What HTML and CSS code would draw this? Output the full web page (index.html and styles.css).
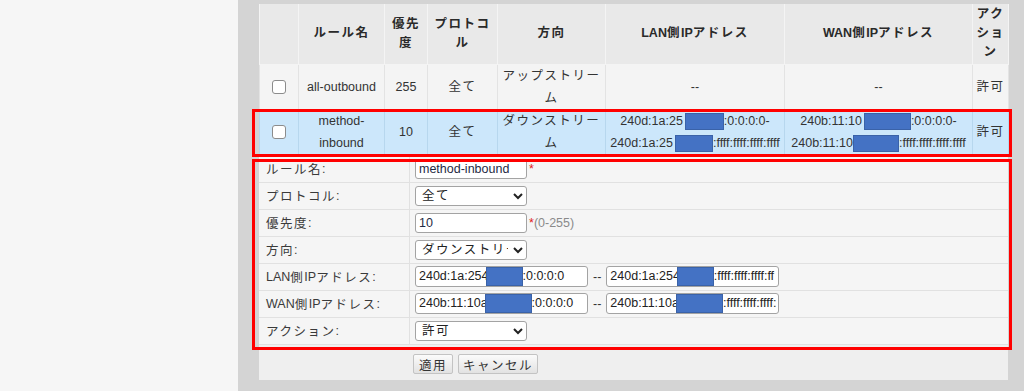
FILE: index.html
```html
<!DOCTYPE html>
<html lang="ja">
<head>
<meta charset="utf-8">
<title>ルール設定</title>
<link rel="stylesheet" href="styles.css">
</head>
<body>
<div class="page">
  <aside class="sidebar"></aside>
  <main class="content">
    <section class="panel">
      <table class="rules">
        <colgroup>
          <col class="c-check"><col class="c-name"><col class="c-prio"><col class="c-proto"><col class="c-dir"><col class="c-lan"><col class="c-wan"><col class="c-act">
        </colgroup>
        <thead>
          <tr class="head">
            <th></th>
            <th><span class="jp">ルール名</span></th>
            <th><span class="jp">優先度</span></th>
            <th><span class="jp">プロトコル</span></th>
            <th><span class="jp">方向</span></th>
            <th>LAN<span class="jp">側</span>IP<span class="jp">アドレス</span></th>
            <th>WAN<span class="jp">側</span>IP<span class="jp">アドレス</span></th>
            <th><span class="jp">アクション</span></th>
          </tr>
        </thead>
        <tbody>
          <tr class="row">
            <td><input type="checkbox" class="chk"></td>
            <td>all-outbound</td>
            <td>255</td>
            <td><span class="jp">全て</span></td>
            <td><span class="jp">アップストリーム</span></td>
            <td>--</td>
            <td>--</td>
            <td><span class="jp">許可</span></td>
          </tr>
          <tr class="row row-sel">
            <td><input type="checkbox" class="chk"></td>
            <td>method-inbound</td>
            <td>10</td>
            <td><span class="jp">全て</span></td>
            <td><span class="jp">ダウンストリーム</span></td>
            <td class="ip">240d:1a:25<span class="mask m-t1"></span>:0:0:0:0-<br>240d:1a:25<span class="mask m-t2"></span>:ffff:ffff:ffff:ffff</td>
            <td class="ip">240b:11:10<span class="mask m-t3"></span>:0:0:0:0-<br>240b:11:10<span class="mask m-t4"></span>:ffff:ffff:ffff:ffff</td>
            <td><span class="jp">許可</span></td>
          </tr>
        </tbody>
      </table>

      <div class="form">
        <div class="frow">
          <div class="flabel"><span class="jp">ルール名</span>:</div>
          <div class="fval"><input class="text" type="text" value="method-inbound"><span class="req">*</span></div>
        </div>
        <div class="frow">
          <div class="flabel"><span class="jp">プロトコル</span>:</div>
          <div class="fval"><select class="sel"><option>全て</option></select></div>
        </div>
        <div class="frow">
          <div class="flabel"><span class="jp">優先度</span>:</div>
          <div class="fval"><input class="text" type="text" value="10"><span class="req">*</span><span class="hint">(0-255)</span></div>
        </div>
        <div class="frow">
          <div class="flabel"><span class="jp">方向</span>:</div>
          <div class="fval"><select class="sel"><option>ダウンストリーム</option></select></div>
        </div>
        <div class="frow">
          <div class="flabel">LAN<span class="jp">側</span>IP<span class="jp">アドレス</span>:</div>
          <div class="fval">
            <span class="ipfield">240d:1a:254<span class="mask fm m-f1"></span>:0:0:0:0</span>
            <span class="sep">--</span>
            <span class="ipfield">240d:1a:254<span class="mask fm m-f1"></span>:ffff:ffff:ffff:ff</span>
          </div>
        </div>
        <div class="frow">
          <div class="flabel">WAN<span class="jp">側</span>IP<span class="jp">アドレス</span>:</div>
          <div class="fval">
            <span class="ipfield">240b:11:10a<span class="mask fm m-f2"></span>:0:0:0:0</span>
            <span class="sep">--</span>
            <span class="ipfield">240b:11:10a<span class="mask fm m-f2"></span>:ffff:ffff:ffff:</span>
          </div>
        </div>
        <div class="frow">
          <div class="flabel"><span class="jp">アクション</span>:</div>
          <div class="fval"><select class="sel"><option>許可</option></select></div>
        </div>
      </div>

      <div class="actions">
        <button class="btn btn-apply"><span class="jp">適用</span></button>
        <button class="btn btn-cancel"><span class="jp">キャンセル</span></button>
      </div>
    </section>
  </main>
  <div class="callout callout-row"></div>
  <div class="callout callout-form"></div>
</div>
</body>
</html>
```

FILE: styles.css
```css
* { box-sizing: border-box; }

html, body {
  margin: 0;
  padding: 0;
}

body {
  font-family: "Liberation Sans", "Noto Sans CJK JP", sans-serif;
  font-size: 12.5px;
  color: #333;
  background: #d4d4d4;
}

.jp { letter-spacing: 1.5px; }

.page {
  position: relative;
  display: flex;
  height: 391px;
  overflow: hidden;
}

.sidebar {
  width: 238px;
  flex: none;
  background: #f6f6f6;
}

.content {
  flex: 1;
  padding: 4px 16px 0 21px;
  background: #d4d4d4;
}

.panel {
  width: 749px;
  height: 376px;
  background: #efefef;
}

/* ---------- rule table ---------- */
.rules {
  width: 749px;
  border-collapse: collapse;
  table-layout: fixed;
}

.c-check { width: 39px; }
.c-name  { width: 86px; }
.c-prio  { width: 43px; }
.c-proto { width: 70px; }
.c-dir   { width: 108px; }
.c-lan   { width: 179px; }
.c-wan   { width: 188px; }
.c-act   { width: 36px; }

.rules th,
.rules td {
  text-align: center;
  vertical-align: middle;
  padding: 0 2px;
}

.rules th {
  height: 60px;
  background: #e9e9e9;
  border: 1px solid #f4f4f4;
  border-top: 0;
  font-weight: bold;
  line-height: 19px;
  color: #2a2a2a;
}

.rules td {
  line-height: 22px;
  border: 1px solid #e3e3e3;
}

.row td {
  height: 45px;
  background: #f4f4f4;
}

.row-sel td {
  height: 46px;
  background: #cce7fb;
  border-color: #b7d7ee;
}

.rules td.ip {
  white-space: nowrap;
  padding: 0;
}

.chk {
  appearance: none;
  -webkit-appearance: none;
  display: block;
  margin: 0 auto;
  width: 14px;
  height: 14px;
  background: #fff;
  border: 1px solid #8c8c8c;
  border-radius: 3px;
}

/* redaction blocks */
.mask {
  display: inline-block;
  height: 17px;
  vertical-align: middle;
  background: #4472c4;
  border: 1px solid #3a62a8;
}
.m-t1 { width: 39px; margin-left: 2px; }
.m-t2 { width: 38px; margin-left: 2px; }
.m-t3 { width: 47px; margin-left: 2px; }
.m-t4 { width: 46px; margin-left: 0; }

/* ---------- edit form ---------- */
.form {
  background: #f5f5f5;
}

.frow {
  display: flex;
  height: 27px;
  border-bottom: 1px solid #e1e1e1;
}

.flabel {
  width: 151px;
  flex: none;
  display: flex;
  align-items: center;
  padding-left: 7px;
  border-right: 1px solid #e1e1e1;
  color: #3a3a3a;
}

.fval {
  flex: 1;
  display: flex;
  align-items: center;
  gap: 5px;
  padding-left: 5px;
}

.text {
  width: 112px;
  height: 20px;
  padding: 0 3px;
  font: inherit;
  color: #1f2a44;
  background: #fff;
  border: 1px solid #a3a3a3;
  border-radius: 3px;
}

.req {
  color: #e02020;
  margin-left: -3px;
}

.hint {
  color: #8a8a8a;
  margin-left: -5px;
}

.sel {
  width: 112px;
  height: 20px;
  padding: 0 2px;
  font: inherit;
  letter-spacing: 1.5px;
  color: #222;
  background: #fff;
  border: 1px solid #a3a3a3;
  border-radius: 3px;
}

.ipfield {
  display: inline-block;
  width: 173px;
  height: 21px;
  padding: 0 3px;
  line-height: 19px;
  white-space: nowrap;
  overflow: hidden;
  color: #222;
  background: #fff;
  border: 1px solid #a3a3a3;
  border-radius: 3px;
}

.mask.fm {
  height: 19px;
  vertical-align: top;
  margin-left: -3px;
}
.m-f1 { width: 37px; }
.m-f2 { width: 47px; }

.sep { color: #333; }

/* ---------- buttons ---------- */
.actions {
  display: flex;
  gap: 5px;
  padding: 9px 0 0 154px;
}

.btn {
  height: 20px;
  padding: 0 2px;
  font: inherit;
  white-space: nowrap;
  color: #333;
  background: linear-gradient(#fbfbfb, #e2e2e2);
  border: 1px solid #c3c3c3;
  border-radius: 2px;
}
.btn-apply { width: 40px; }
.btn-cancel { width: 80px; }

/* ---------- red annotation frames ---------- */
.callout {
  position: absolute;
  border: 3px solid #ff0000;
  pointer-events: none;
}

.callout-row {
  left: 252px;
  top: 109px;
  width: 760px;
  height: 48px;
}

.callout-form {
  left: 252px;
  top: 159px;
  width: 760px;
  height: 191px;
}
```
